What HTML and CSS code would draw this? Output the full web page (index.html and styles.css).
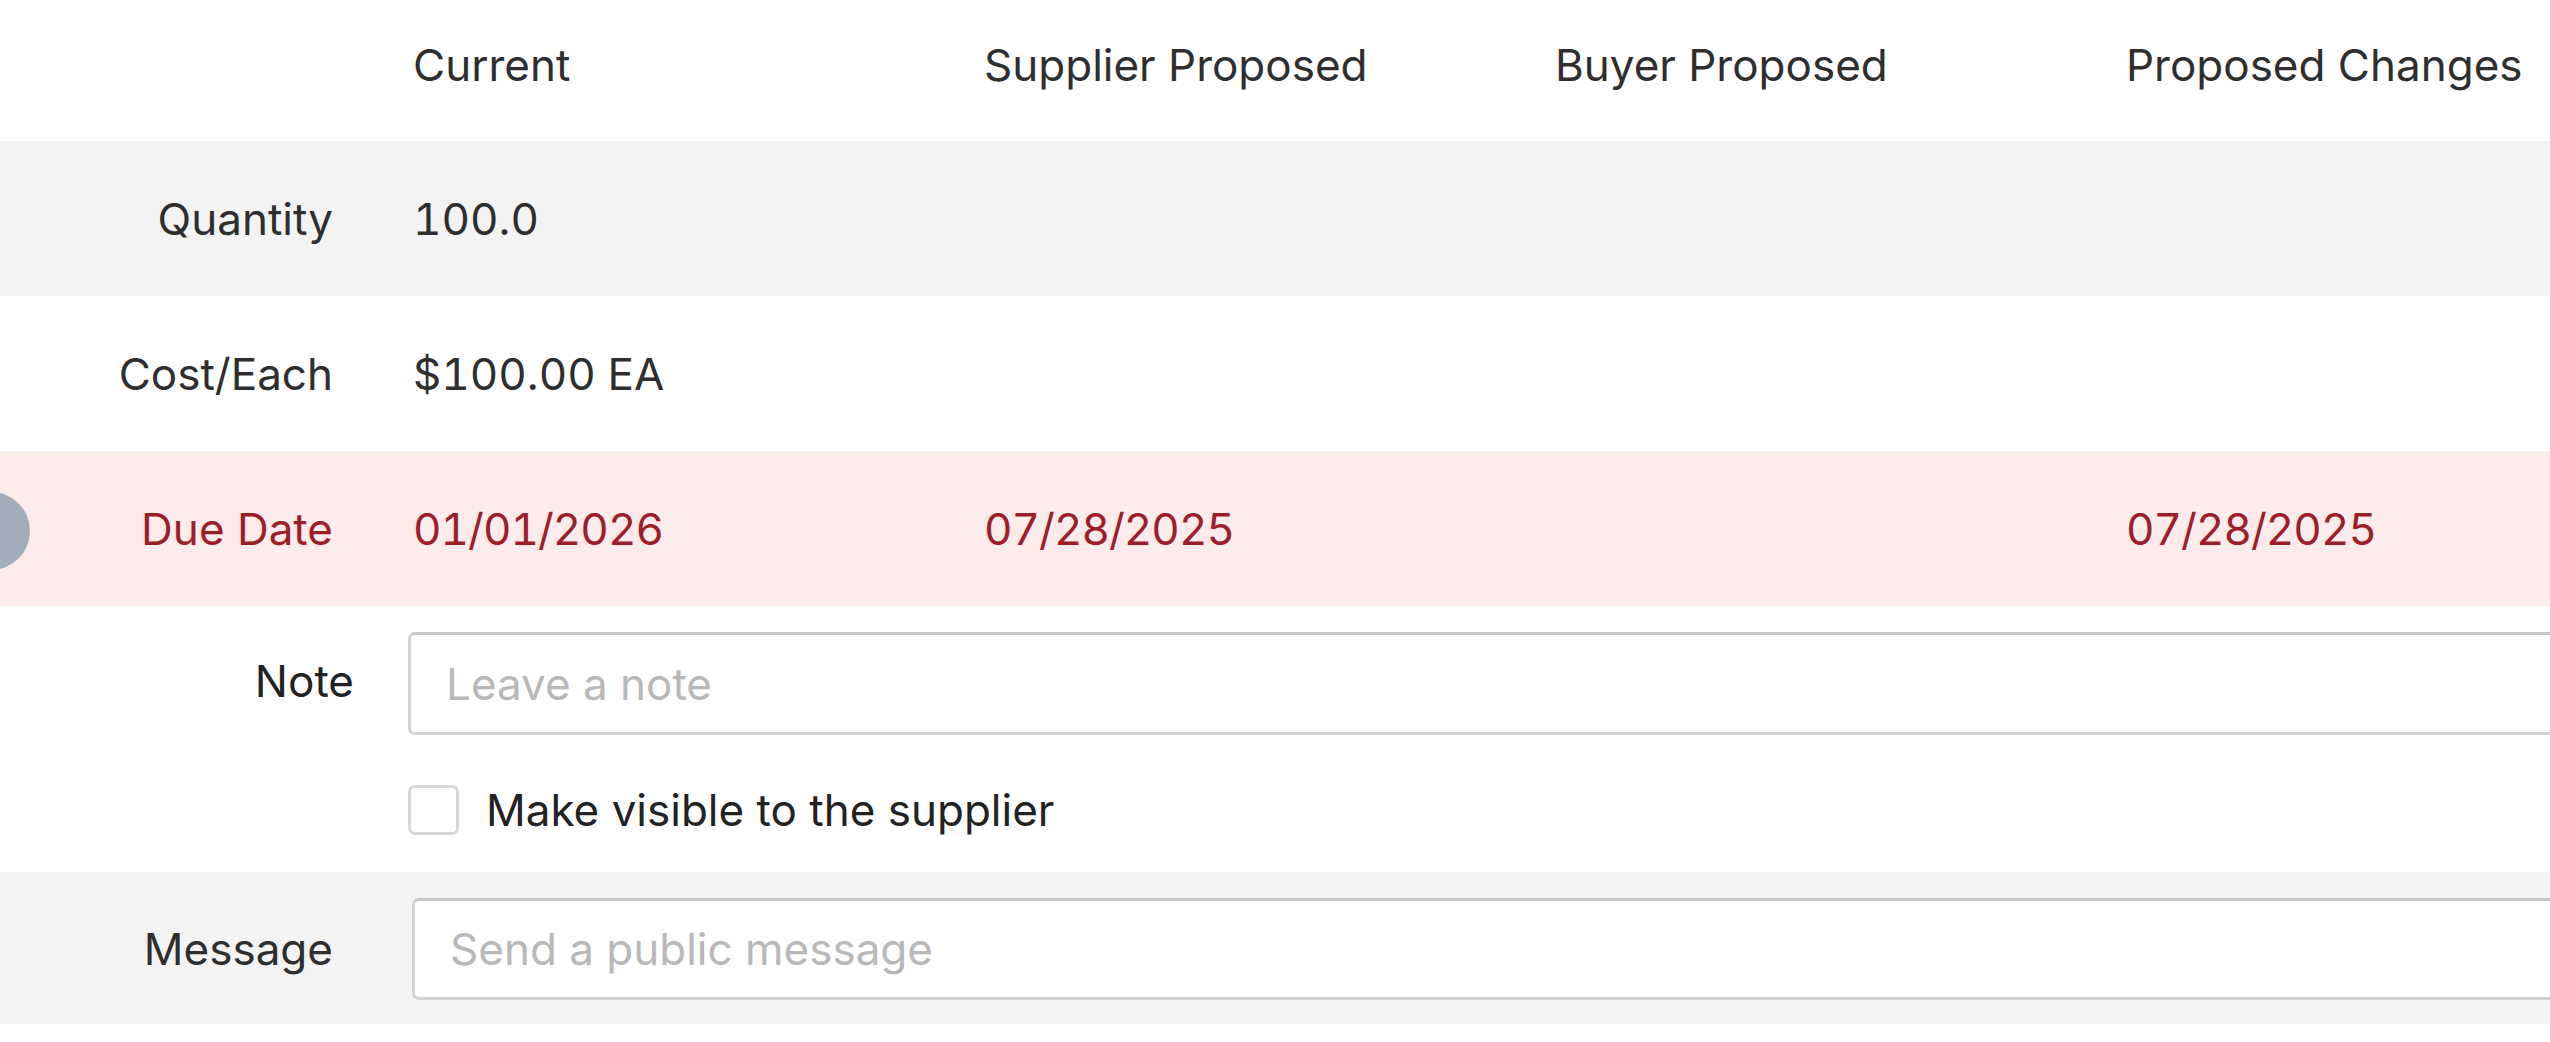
FILE: index.html
```html
<!DOCTYPE html>
<html lang="en">
<head>
<meta charset="utf-8">
<title>Change order</title>
<link rel="stylesheet" href="styles.css">
</head>
<body>
<div class="page">
  <div class="grid head">
    <div class="label"></div>
    <div class="cell">Current</div>
    <div class="cell">Supplier Proposed</div>
    <div class="cell">Buyer Proposed</div>
    <div class="cell">Proposed Changes</div>
  </div>
  <div class="grid row shaded">
    <div class="label">Quantity</div>
    <div class="cell num">100.0</div>
    <div class="cell"></div>
    <div class="cell"></div>
    <div class="cell"></div>
  </div>
  <div class="grid row">
    <div class="label">Cost/Each</div>
    <div class="cell num">$100.00 EA</div>
    <div class="cell"></div>
    <div class="cell"></div>
    <div class="cell"></div>
  </div>
  <div class="grid row changed">
    <span class="marker"></span>
    <div class="label">Due Date</div>
    <div class="cell num date">01/01/2026</div>
    <div class="cell num date">07/28/2025</div>
    <div class="cell"></div>
    <div class="cell num date">07/28/2025</div>
  </div>
  <div class="note-block">
    <div class="note-row">
      <label class="note-label" for="note">Note</label>
      <input class="field" id="note" type="text" placeholder="Leave a note">
    </div>
    <label class="check-row">
      <span class="checkbox"></span>
      <span class="check-text">Make visible to the supplier</span>
    </label>
  </div>
  <div class="message-row">
    <label class="message-label" for="msg">Message</label>
    <input class="field" id="msg" type="text" placeholder="Send a public message">
  </div>
</div>
</body>
</html>
```
FILE: styles.css
```css
html, body {
  margin: 0;
  padding: 0;
  background: #ffffff;
  overflow: hidden;
}
body {
  font-family: "Inter", "Liberation Sans", sans-serif;
  font-size: 44px;
  color: #2e2e2e;
}
.page {
  width: 2550px;
  height: 1042px;
  overflow: hidden;
}
.grid {
  display: grid;
  grid-template-columns: 333px 491px 491px 491px 1fr;
  column-gap: 80px;
  align-items: center;
}
.head {
  height: 130px;
  padding-bottom: 11px;
}
.row {
  height: 155px;
  position: relative;
}
.shaded {
  background: #f3f3f3;
}
.label {
  text-align: right;
  white-space: nowrap;
}
.cell {
  white-space: nowrap;
}
.num {
  font-feature-settings: "tnum" 1;
  font-variant-numeric: tabular-nums;
}
.date {
  letter-spacing: -1px;
}
.changed {
  background: #fcebeb;
  color: #9e1d2a;
}
.marker {
  position: absolute;
  left: -48px;
  top: 41px;
  width: 78px;
  height: 78px;
  border-radius: 50%;
  background: #a3aebb;
}
.note-block {
  padding: 26px 0 35px;
  display: flex;
  flex-direction: column;
  gap: 48px;
}
.note-row {
  display: flex;
  align-items: center;
  gap: 54px;
}
.note-label {
  width: 354px;
  text-align: right;
  color: #222;
  padding-bottom: 6px;
}
.field {
  flex: 1;
  margin-right: -60px;
  height: 103px;
  box-sizing: border-box;
  border: 3px solid #d2d2d2;
  border-top-color: #c6c6c6;
  border-radius: 7px;
  background: #fff;
  padding: 0 35px;
  font-family: inherit;
  font-size: 44px;
  color: #2e2e2e;
  outline: none;
}
.field::placeholder {
  color: #b8b8b8;
}
.check-row {
  display: flex;
  align-items: center;
  gap: 27px;
  padding-left: 408px;
}
.checkbox {
  width: 51px;
  height: 50px;
  box-sizing: border-box;
  border: 3px solid #d9d9d9;
  border-radius: 7px;
  background: #fff;
}
.check-text {
  color: #222;
}
.message-row {
  background: #f3f3f3;
  display: flex;
  align-items: center;
  gap: 79px;
  padding: 26px 0 24px;
}
.message-label {
  width: 333px;
  text-align: right;
}
.message-row .field {
  height: 102px;
}
```
